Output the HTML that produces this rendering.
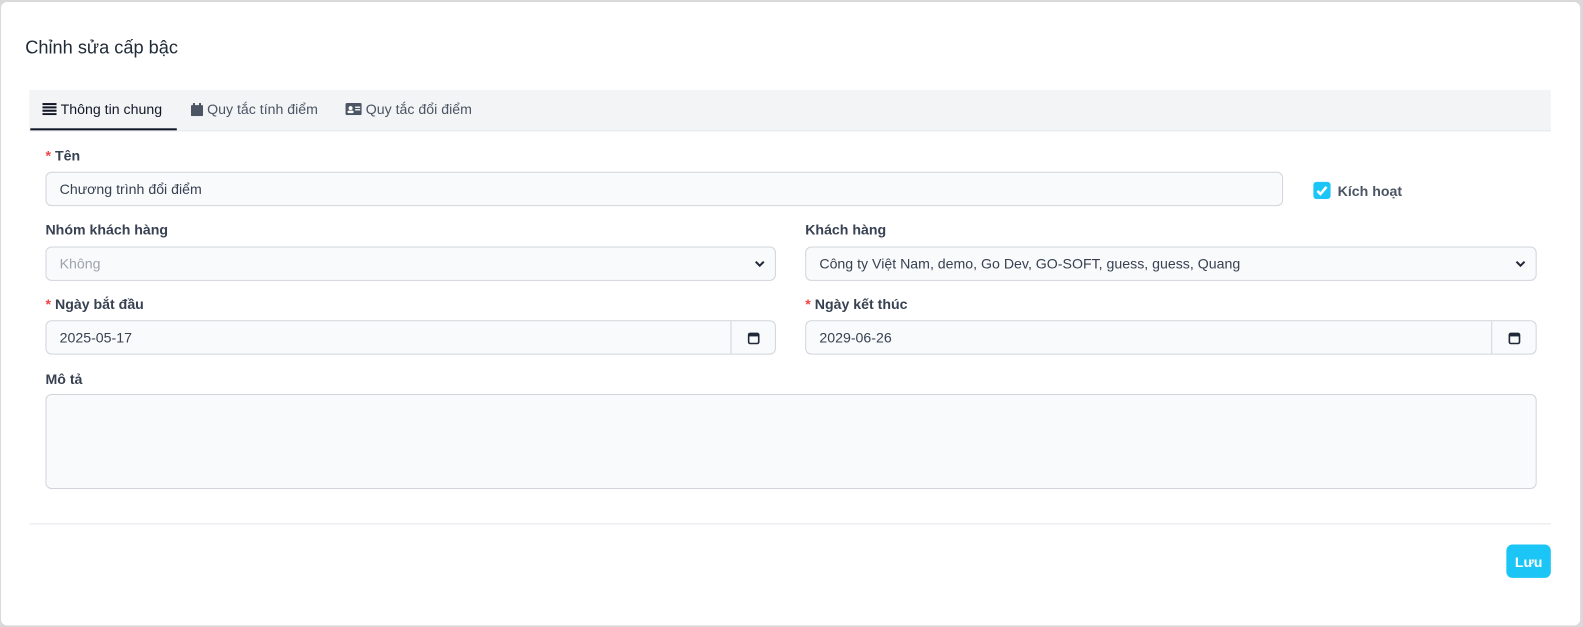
<!DOCTYPE html><html style="width:1583px;height:627px;overflow:hidden;margin:0"><head><meta charset="utf-8"><style>
body{margin:0;width:1583px;height:627px;background:#d9d9d9;font-family:"Liberation Sans",sans-serif;position:relative;overflow:hidden}
.wrap{position:absolute;left:0;top:0;width:1583px;height:627px;transform:scale(1.0103);transform-origin:0 0}
.card{position:absolute;left:1px;top:2px;width:1563px;height:617px;background:#fff;border-radius:6px}
.a{position:absolute}
.t{font-size:18px;color:#1f2937;left:24px;top:35px}
.tabs{left:28px;top:87px;width:1506px;height:40px;background:#f3f4f6;border-bottom:1px solid #e5e7eb}
.tab{position:absolute;top:11px;font-size:14px;color:#4b5563;display:flex;align-items:center;gap:4px}
.lbl{font-size:14px;font-weight:bold;color:#374151}
.lbl i{color:#ef4444;font-style:normal;margin-right:4px}
.in{border:1px solid #d1d5db;border-radius:6px;background:#f9fafb;box-sizing:border-box;font-size:14px;color:#374151;padding:0 13px;display:flex;align-items:center}
.cal{position:absolute;right:0;top:0;width:43px;height:100%;border-left:1px solid #d1d5db;display:flex;align-items:center;justify-content:center}
.chev{position:absolute;right:8px;top:9px}
</style></head><body><div class="wrap"><div class="card">
<div class="a t">Chỉnh sửa cấp bậc</div>
<div class="a tabs">
<div class="tab" style="left:13px;color:#111827"><svg width="14" height="12"><g fill="#111827"><rect y="0" width="14" height="2"/><rect y="3.3" width="14" height="2"/><rect y="6.6" width="14" height="2"/><rect y="10" width="14" height="2"/></g></svg>Thông tin chung</div>
<div style="position:absolute;left:1px;top:38px;width:145px;height:2px;background:#111827"></div>
<div class="tab" style="left:160px"><svg width="12" height="13"><g fill="#4b5563"><rect x="2" y="0" width="2" height="3"/><rect x="8" y="0" width="2" height="3"/><rect y="2" width="12" height="11" rx="1"/></g></svg>Quy tắc tính điểm</div>
<div class="tab" style="left:313px"><svg width="16" height="12"><rect width="16" height="12" rx="1.5" fill="#4b5563"/><circle cx="5" cy="5" r="2" fill="#fff"/><rect x="2" y="7.5" width="6" height="2.5" rx="1" fill="#fff"/><rect x="9.5" y="3.5" width="5" height="1.3" fill="#fff"/><rect x="9.5" y="6" width="5" height="1.3" fill="#fff"/></svg>Quy tắc đổi điểm</div>
</div>
<div class="a lbl" style="left:44px;top:144px"><i>*</i>Tên</div>
<div class="a in" style="left:44px;top:168px;width:1225px;height:34px">Chương trình đổi điểm</div>
<div class="a" style="left:1299px;top:178px;width:17px;height:17px;background:#1bc5f5;border-radius:3px"><svg width="17" height="17"><path d="M4 9l3 3 6-7" stroke="#fff" stroke-width="2.6" fill="none"/></svg></div>
<div class="a lbl" style="left:1323px;top:179px;color:#4b5563">Kích hoạt</div>
<div class="a lbl" style="left:44px;top:217px">Nhóm khách hàng</div>
<div class="a in" style="left:44px;top:242px;width:723px;height:34px;color:#9ca3af">Không<svg class="chev" width="14" height="14"><path d="M3 5l4 4 4-4" stroke="#1f2937" stroke-width="2" fill="none"/></svg></div>
<div class="a lbl" style="left:796px;top:217px">Khách hàng</div>
<div class="a in" style="left:796px;top:242px;width:724px;height:34px">Công ty Việt Nam, demo, Go Dev, GO-SOFT, guess, guess, Quang<svg class="chev" width="14" height="14"><path d="M3 5l4 4 4-4" stroke="#1f2937" stroke-width="2" fill="none"/></svg></div>
<div class="a lbl" style="left:44px;top:291px"><i>*</i>Ngày bắt đầu</div>
<div class="a in" style="left:44px;top:315px;width:723px;height:34px">2025-05-17<div class="cal"><svg width="12" height="13"><rect x="1" y="2" width="10" height="10" rx="1.5" fill="none" stroke="#1f2937" stroke-width="1.6"/><rect x="1" y="2" width="10" height="3" fill="#1f2937"/></svg></div></div>
<div class="a lbl" style="left:796px;top:291px"><i>*</i>Ngày kết thúc</div>
<div class="a in" style="left:796px;top:315px;width:724px;height:34px">2029-06-26<div class="cal"><svg width="12" height="13"><rect x="1" y="2" width="10" height="10" rx="1.5" fill="none" stroke="#1f2937" stroke-width="1.6"/><rect x="1" y="2" width="10" height="3" fill="#1f2937"/></svg></div></div>
<div class="a lbl" style="left:44px;top:365px">Mô tả</div>
<div class="a in" style="left:44px;top:388px;width:1476px;height:94px"></div>
<div class="a" style="left:28px;top:516px;width:1506px;height:1px;background:#e5e7eb"></div>
<div class="a" style="left:1490px;top:537px;width:44px;height:33px;background:#1bc5f5;border-radius:6px;color:#fff;font-size:14px;font-weight:bold;display:flex;align-items:center;justify-content:center">Lưu</div>
</div></div></body></html>
